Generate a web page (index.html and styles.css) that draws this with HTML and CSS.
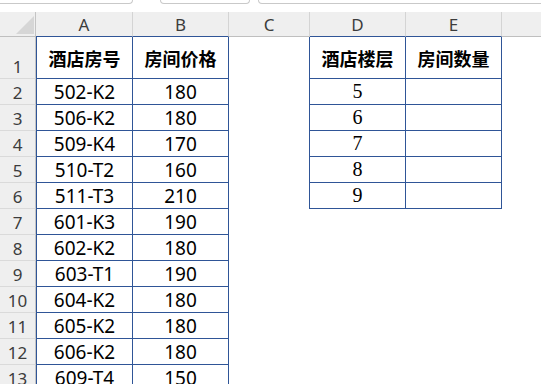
FILE: index.html
```html
<!DOCTYPE html>
<html lang="zh-CN">
<head>
<meta charset="utf-8">
<title>酒店房号</title>
<link rel="stylesheet" href="styles.css">
</head>
<body>
<div class="topbar">
  <div class="box box-name"></div>
  <div class="box box-mid"></div>
  <div class="box box-formula"></div>
</div>
<div class="sheet">
  <!-- column headers -->
  <div class="ch corner"><svg class="tri" width="18" height="18" viewBox="0 0 18 18"><polygon points="18,0 18,18 0,18" fill="#d6d6d6"/></svg></div>
  <div class="ch tt">A</div>
  <div class="ch tt">B</div>
  <div class="ch">C</div>
  <div class="ch tt">D</div>
  <div class="ch tt">E</div>
  <div class="ch last"></div>

  <!-- row 1 -->
  <div class="rh">1</div>
  <div class="c ta hd">酒店房号</div>
  <div class="c tb hd">房间价格</div>
  <div class="c tl"></div>
  <div class="c tb hd">酒店楼层</div>
  <div class="c tb hd">房间数量</div>
  <div class="c"></div>

  <div class="rh">2</div>
  <div class="c ta">502-K2</div>
  <div class="c tb">180</div>
  <div class="c tl"></div>
  <div class="c tb serif">5</div>
  <div class="c tb"></div>
  <div class="c"></div>

  <div class="rh">3</div>
  <div class="c ta">506-K2</div>
  <div class="c tb">180</div>
  <div class="c tl"></div>
  <div class="c tb serif">6</div>
  <div class="c tb"></div>
  <div class="c"></div>

  <div class="rh">4</div>
  <div class="c ta">509-K4</div>
  <div class="c tb">170</div>
  <div class="c tl"></div>
  <div class="c tb serif">7</div>
  <div class="c tb"></div>
  <div class="c"></div>

  <div class="rh">5</div>
  <div class="c ta">510-T2</div>
  <div class="c tb">160</div>
  <div class="c tl"></div>
  <div class="c tb serif">8</div>
  <div class="c tb"></div>
  <div class="c"></div>

  <div class="rh">6</div>
  <div class="c ta">511-T3</div>
  <div class="c tb">210</div>
  <div class="c tl"></div>
  <div class="c tb serif">9</div>
  <div class="c tb"></div>
  <div class="c"></div>

  <div class="rh">7</div>
  <div class="c ta">601-K3</div>
  <div class="c tb">190</div>
  <div class="c"></div><div class="c"></div><div class="c"></div><div class="c"></div>

  <div class="rh">8</div>
  <div class="c ta">602-K2</div>
  <div class="c tb">180</div>
  <div class="c"></div><div class="c"></div><div class="c"></div><div class="c"></div>

  <div class="rh">9</div>
  <div class="c ta">603-T1</div>
  <div class="c tb">190</div>
  <div class="c"></div><div class="c"></div><div class="c"></div><div class="c"></div>

  <div class="rh">10</div>
  <div class="c ta">604-K2</div>
  <div class="c tb">180</div>
  <div class="c"></div><div class="c"></div><div class="c"></div><div class="c"></div>

  <div class="rh">11</div>
  <div class="c ta">605-K2</div>
  <div class="c tb">180</div>
  <div class="c"></div><div class="c"></div><div class="c"></div><div class="c"></div>

  <div class="rh">12</div>
  <div class="c ta">606-K2</div>
  <div class="c tb">180</div>
  <div class="c"></div><div class="c"></div><div class="c"></div><div class="c"></div>

  <div class="rh">13</div>
  <div class="c ta">609-T4</div>
  <div class="c tb">150</div>
  <div class="c"></div><div class="c"></div><div class="c"></div><div class="c"></div>
</div>
</body>
</html>
```
FILE: styles.css
```css
* { box-sizing: border-box; }
html, body { margin: 0; padding: 0; background: #ffffff; overflow: hidden; }
body { width: 541px; height: 384px; }

.topbar {
  height: 12px;
  display: flex;
  align-items: flex-start;
  background: #ffffff;
  overflow: hidden;
}
.box {
  height: 4px;
  border: 1px solid #c9c9c9;
  border-top: none;
  border-radius: 0 0 5px 5px;
  background: #ffffff;
  flex: none;
}
.box-name { margin-left: -6px; width: 139px; }
.box-mid { margin-left: 27px; width: 90px; }
.box-formula { margin-left: 8px; width: 320px; }

.sheet {
  display: grid;
  grid-template-columns: 36px 97px 96px 81px 96px 96px 1fr;
  grid-template-rows: 25px 42px repeat(12, 26px);
  font-family: "Noto Sans", "Noto Sans CJK SC", sans-serif;
}

.ch {
  background: #efefef;
  border-right: 1px solid #d4d4d4;
  border-bottom: 1px solid #bfbfbf;
  display: flex;
  align-items: center;
  justify-content: center;
  font-size: 17px;
  color: #3c3c3c;
  line-height: 1;
}
.ch.tt { border-bottom-color: #2f5597; }
.ch.last { border-right: none; }
.corner {
  border-right-color: #c4c4c4;
  align-items: flex-end;
  justify-content: flex-end;
  padding: 0 1px 2px 0;
}
.tri { display: block; }

.rh {
  background: #efefef;
  border-right: 1px solid #c4c4c4;
  border-bottom: 1px solid #dadada;
  display: flex;
  align-items: flex-end;
  justify-content: center;
  font-size: 17px;
  color: #3c3c3c;
  line-height: 22px;
}

.c {
  display: flex;
  align-items: center;
  justify-content: center;
  font-size: 19px;
  color: #000000;
  white-space: nowrap;
}
.ta {
  border-left: 1px solid #2f5597;
  border-right: 1px solid #2f5597;
  border-bottom: 1px solid #2f5597;
}
.tb {
  border-right: 1px solid #2f5597;
  border-bottom: 1px solid #2f5597;
}
.tl { border-right: 1px solid #2f5597; }

.hd {
  font-family: "Noto Sans CJK SC", sans-serif;
  font-weight: 700;
  font-size: 18px;
}
.serif {
  font-family: "Liberation Serif", serif;
  font-size: 20px;
}
```
